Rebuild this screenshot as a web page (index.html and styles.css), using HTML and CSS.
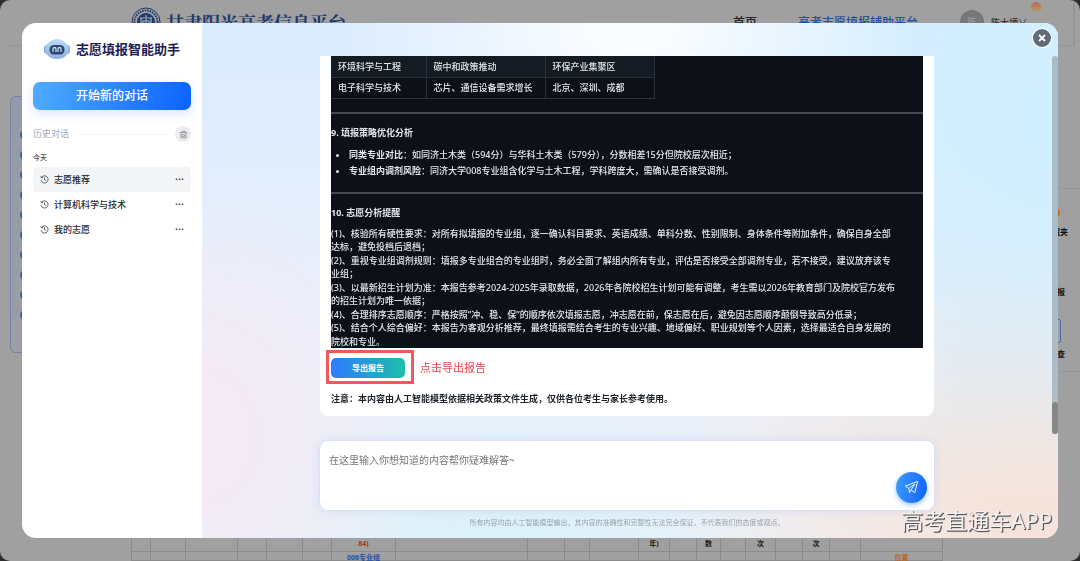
FILE: index.html
```html
<!DOCTYPE html>
<html lang="zh-CN">
<head>
<meta charset="utf-8">
<meta name="viewport" content="width=device-width, initial-scale=1">
<title>志愿填报智能助手</title>
<link rel="stylesheet" href="styles.css">
</head>
<body>
<div class="page">
  <header class="site-header">
    <div class="brand">
      <svg class="brand-seal" viewBox="0 0 30 30" aria-hidden="true">
        <circle cx="15" cy="15" r="14" fill="none" stroke="#1d3a68" stroke-width="1"/>
        <circle cx="15" cy="15" r="11.5" fill="none" stroke="#1d3a68" stroke-width="2" stroke-dasharray="1.5 1"/>
        <circle cx="15" cy="15" r="9" fill="#1d3a68"/>
        <path d="M9 11h12M15 8v3M10 11v10M20 11v10M12 14h6v5h-6zM15 12v8" fill="none" stroke="#a8b0bb" stroke-width="1.2"/>
      </svg>
      <span class="brand-name">甘肃阳光高考信息平台</span>
    </div>
    <nav class="site-nav">
      <a class="nav-link" href="#">首页</a>
      <a class="nav-link nav-current" href="#">高考志愿填报辅助平台</a>
    </nav>
    <div class="user"><span class="avatar">陈</span><span>陈大埂∨</span></div>
    <span class="mascot"></span>
  </header>
  <div class="site-body">
    <div class="filter-card"><i></i><i></i><i></i><i></i><i></i><i></i><i></i><i></i><i></i><i></i></div>
    <div class="tool-card">
      <span class="tool-dot"></span>
      <span>收藏夹</span>
      <span class="tool-second">填报</span>
      <span class="tool-frame"></span>
      <span>检查</span>
    </div>
  </div>
  <table class="plan-table">
    <colgroup><col class="w19"><col class="w35"><col class="w52"><col class="w29"><col class="w36"><col class="w29"><col class="w64"><col class="w132"><col class="w37"><col class="w25"><col class="w49"><col class="w31"><col class="w27"><col class="w24"><col class="w25"><col class="w30"><col class="w27"><col class="w27"><col class="w31"><col class="w82"></colgroup>
    <tr><td></td><td></td><td></td><td></td><td></td><td></td><td class="red">84)</td><td></td><td></td><td></td><td></td><td>年)</td><td></td><td>数</td><td></td><td>次</td><td></td><td>次</td><td></td><td></td></tr>
    <tr><td></td><td></td><td></td><td></td><td></td><td></td><td class="blue">006专业组</td><td></td><td></td><td></td><td></td><td></td><td></td><td></td><td></td><td></td><td></td><td></td><td></td><td class="orange">位置</td></tr>
  </table>
</div>

<div class="dialog" role="dialog" aria-label="志愿填报智能助手">
  <aside class="sidebar">
    <div class="logo">
      <svg class="robot" viewBox="0 0 26 20" aria-hidden="true">
        <defs><linearGradient id="head" x1="0" y1="0" x2="0" y2="1"><stop offset="0" stop-color="#b9dcf6"/><stop offset="1" stop-color="#8bb0df"/></linearGradient></defs>
        <rect x="0" y="6" width="6" height="9" rx="3" fill="#8fb2dc"/>
        <rect x="20" y="6" width="6" height="9" rx="3" fill="#8fb2dc"/>
        <path d="M13 0C16 0 17 1 19 2C23 4 25 7 24.500 11.500C24 17 19 20 13 20C7 20 2 17 1.500 11.500C1 7 3 4 7 2C9 1 10 0 13 0Z" fill="url(#head)"/>
        <rect x="5.500" y="6" width="15" height="9.500" rx="4.500" fill="#34456b"/>
        <path d="M9 13v-3a1.500 1.500 0 0 1 3 0v3M14 13v-3a1.500 1.500 0 0 1 3 0v3" fill="none" stroke="#b5dcfa" stroke-width="1.300"/>
      </svg>
      <span>志愿填报智能助手</span>
    </div>
    <button class="new-chat" type="button">开始新的对话</button>
    <div class="history-head">
      <span>历史对话</span><span class="rule"></span>
      <button class="clear" type="button" aria-label="清空历史对话">
        <svg viewBox="0 0 12 12" aria-hidden="true"><path d="M1 3.500h10M4 3.500V1.500h4v2M2.500 3.500v7h7v-7M4.500 6h3v2.500h-3z" fill="none" stroke="#85888e" stroke-width="1"/></svg>
      </button>
    </div>
    <div class="day">今天</div>
    <ul class="history">
      <li class="active"><svg viewBox="0 0 12 12" aria-hidden="true"><path d="M2 3.200A4.800 4.800 0 1 1 1.300 7M1.300 1.500l.4 2.200 2.200-.2M6 3.200v3l2.200 1.300" fill="none" stroke="#2d323c" stroke-width="1"/></svg><a href="#">志愿推荐</a><button type="button" aria-label="更多">···</button></li>
      <li><svg viewBox="0 0 12 12" aria-hidden="true"><path d="M2 3.200A4.800 4.800 0 1 1 1.300 7M1.300 1.500l.4 2.200 2.200-.2M6 3.200v3l2.200 1.300" fill="none" stroke="#2d323c" stroke-width="1"/></svg><a href="#">计算机科学与技术</a><button type="button" aria-label="更多">···</button></li>
      <li><svg viewBox="0 0 12 12" aria-hidden="true"><path d="M2 3.200A4.800 4.800 0 1 1 1.300 7M1.300 1.500l.4 2.200 2.200-.2M6 3.200v3l2.200 1.300" fill="none" stroke="#2d323c" stroke-width="1"/></svg><a href="#">我的志愿</a><button type="button" aria-label="更多">···</button></li>
    </ul>
  </aside>

  <main class="chat">
    <section class="message">
      <div class="report">
        <table class="majors">
          <tr><td>环境科学与工程</td><td>碳中和政策推动</td><td>环保产业集聚区</td></tr>
          <tr><td>电子科学与技术</td><td>芯片、通信设备需求增长</td><td>北京、深圳、成都</td></tr>
        </table>
        <hr>
        <h3>9. 填报策略优化分析</h3>
        <ul>
          <li><strong>同类专业对比</strong>：如同济土木类（594分）与华科土木类（579分），分数相差15分但院校层次相近；</li>
          <li><strong>专业组内调剂风险</strong>：同济大学008专业组含化学与土木工程，学科跨度大，需确认是否接受调剂。</li>
        </ul>
        <hr>
        <h3>10. 志愿分析提醒</h3>
        <p>(1)、核验所有硬性要求：对所有拟填报的专业组，逐一确认科目要求、英语成绩、单科分数、性别限制、身体条件等附加条件，确保自身全部<br>达标，避免投档后退档；<br>
        (2)、重视专业组调剂规则：填报多专业组合的专业组时，务必全面了解组内所有专业，评估是否接受全部调剂专业，若不接受，建议放弃该专<br>业组；<br>
        (3)、以最新招生计划为准：本报告参考2024-2025年录取数据，2026年各院校招生计划可能有调整，考生需以2026年教育部门及院校官方发布<br>的招生计划为唯一依据；<br>
        (4)、合理排序志愿顺序：严格按照“冲、稳、保”的顺序依次填报志愿，冲志愿在前，保志愿在后，避免因志愿顺序颠倒导致高分低录；<br>
        (5)、结合个人综合偏好：本报告为客观分析推荐，最终填报需结合考生的专业兴趣、地域偏好、职业规划等个人因素，选择最适合自身发展的<br>院校和专业。</p>
      </div>
      <div class="export-row">
        <span class="export-wrap"><button class="export" type="button">导出报告</button><span class="mark"></span></span>
        <span class="mark-text">点击导出报告</span>
      </div>
      <p class="notice">注意：本内容由人工智能模型依据相关政策文件生成，仅供各位考生与家长参考使用。</p>
    </section>
    <form class="composer">
      <textarea aria-label="输入内容" placeholder="在这里输入你想知道的内容帮你疑难解答~"></textarea>
      <button class="send" type="button" aria-label="发送">
        <svg viewBox="0 0 16 16" aria-hidden="true"><path d="M1.500 6.500L14.500 1.500L11.500 13.500L7.500 10.500L6 13.500L5 9Z M5 9L11.500 4.500L7.500 10.500" fill="none" stroke="#fff" stroke-width="1" stroke-linejoin="round"/></svg>
      </button>
    </form>
    <p class="disclaimer">所有内容均由人工智能模型输出，其内容的准确性和完整性无法完全保证，不代表我们的态度或观点。</p>
    <div class="scroll"><span></span></div>
  </main>
  <button class="close" type="button" aria-label="关闭"><svg viewBox="0 0 8 8" aria-hidden="true"><path d="M1 1l6 6M7 1l-6 6" stroke="#fff" stroke-width="1.800"/></svg></button>
</div>
<div class="watermark">高考直通车APP</div>
</body>
</html>
```

FILE: styles.css
```css
* { box-sizing: border-box; }
body {
  margin: 0;
  background: #2e2e2e;
  font: 500 9px/1.5 "Noto Sans", "Noto Sans CJK SC", sans-serif;
  color: #1d2129;
}
button { font: inherit; border: 0; padding: 0; cursor: pointer; }
a { color: inherit; text-decoration: none; }
p, h3, ul, hr { margin: 0; padding: 0; }

/* dimmed page behind the dialog */
.page {
  display: flex;
  flex-direction: column;
  height: 100vh;
  overflow: hidden;
  background: #a0a0a0;
  border-radius: 10px;
}
.site-header {
  position: relative;
  display: flex;
  flex: none;
  height: 46px;
  margin: 0 5px;
  padding: 7px 46px 0 126px;
  border-bottom: 1px solid #959595;
  border-right: 2px solid #959595;
}
.brand { display: flex; gap: 5px; flex: 1; }
.brand-seal { width: 30px; height: 30px; }
.brand-name {
  font: 700 18px/30px "Noto Serif CJK SC", "Noto Sans CJK SC", serif;
  color: #1d3a68;
}
.site-nav { display: flex; gap: 41px; margin-right: 42px; font-size: 12px; line-height: 32px; color: #222; }
.nav-current { color: #234f9e; }
.user { display: flex; gap: 7px; line-height: 32px; color: #333; }
.avatar {
  width: 24px;
  height: 24px;
  margin-top: 3px;
  border-radius: 50%;
  background: #777;
  color: #999;
  text-align: center;
  line-height: 24px;
}
.mascot {
  position: absolute;
  top: 2px;
  right: 32px;
  width: 10px;
  height: 9px;
  border-radius: 5px 5px 2px 2px;
  background: linear-gradient(#b96a60, #b09a60);
}
.site-body { display: flex; flex: 1; justify-content: space-between; align-items: flex-start; }
.filter-card {
  display: flex;
  flex-direction: column;
  gap: 10px;
  width: 100px;
  height: 257px;
  margin: 50px 0 0 10px;
  padding: 33px 0 0 9px;
  border: 1px solid #7584a8;
  border-radius: 5px;
  background: linear-gradient(#929bab, #9c9fa3);
}
.filter-card i { flex: none; width: 10px; height: 10px; border-radius: 50%; background: #2f64a0; }
.tool-card {
  display: flex;
  flex-direction: column;
  align-items: flex-end;
  width: 80px;
  height: 184px;
  margin-top: 142px;
  padding: 18px 12px 0 0;
  border: 1px solid #969696;
  border-width: 1px 0;
  font-size: 8px;
  font-weight: 700;
  color: #111;
}
.tool-dot { width: 12px; height: 12px; margin: 0 8px 7px 0; border-radius: 50%; background: #b9751f; }
.tool-second { margin: 48px 3px 21px 0; }
.tool-frame { width: 20px; height: 24px; margin: 0 7px 5px 0; border: 1px solid #4c6ca3; border-radius: 2px; }
.tool-card span:last-child { margin-right: 3px; }
.plan-table {
  flex: none;
  width: 811px;
  margin-left: 131px;
  border-collapse: collapse;
  table-layout: fixed;
  font-size: 7px;
  font-weight: 700;
  line-height: 9px;
  color: #181818;
}
.plan-table td { height: 20px; padding: 3px 0 0; border: 1px solid #8b8b8b; text-align: center; white-space: nowrap; }
.plan-table tr:last-child td { height: 9px; padding: 3px 0 0; line-height: 5px; }
.plan-table .red { color: #b02c2c; }
.plan-table .blue { color: #2250a8; }
.plan-table .orange { color: #b8651c; }
.w19 { width: 19px; } .w24 { width: 24px; } .w25 { width: 25px; } .w27 { width: 27px; }
.w29 { width: 29px; } .w30 { width: 30px; } .w31 { width: 31px; } .w35 { width: 35px; }
.w36 { width: 36px; } .w37 { width: 37px; } .w49 { width: 49px; } .w52 { width: 52px; }
.w64 { width: 64px; } .w82 { width: 82px; } .w132 { width: 132px; }

/* assistant dialog */
.dialog {
  position: fixed;
  inset: 23px 22px;
  display: flex;
  border-radius: 14px;
  background: #fff;
}
.sidebar { width: 180px; flex: none; padding: 14px 11px; }
.logo {
  display: flex;
  align-items: center;
  gap: 6px;
  height: 24px;
  padding-left: 11px;
  font-size: 13px;
  font-weight: 700;
  line-height: 24px;
  color: #1d1b54;
}
.robot { width: 26px; height: 20px; }
.new-chat {
  display: block;
  width: 100%;
  height: 28px;
  margin-top: 21px;
  border-radius: 7px;
  background: linear-gradient(100deg, #4facfe, #0c63ff);
  box-shadow: 0 4px 10px #6478ff33;
  font-size: 12px;
  color: #fff;
}
.history-head { display: flex; align-items: center; gap: 8px; margin-top: 16px; height: 16px; color: #a5a8ae; font-weight: 400; }
.rule { flex: 1; height: 1px; background: #f3f4f6; }
.clear { display: flex; align-items: center; justify-content: center; width: 16px; height: 16px; border-radius: 50%; background: #ececee; }
.clear svg { width: 9px; height: 9px; }
.day { margin-top: 11px; font-size: 7px; line-height: 10px; color: #4b4f58; }
.history { margin-top: 4px; list-style: none; }
.history li { display: flex; align-items: center; gap: 5px; height: 25px; padding: 0 7px; border-radius: 4px; color: #24272e; }
.history li.active { background: #f4f5f6; }
.history svg { width: 9px; height: 9px; }
.history a { flex: 1; }
.history button { background: none; color: #333; font-size: 11px; }

.chat {
  position: relative;
  display: flex;
  flex: 1;
  flex-direction: column;
  min-width: 0;
  padding: 33px 123px 0 117px;
  border-radius: 0 14px 14px 0;
  background:
    radial-gradient(ellipse 34% 45% at 50% 0%, #fafdff 10%, #fafdff00),
    radial-gradient(ellipse 50% 75% at 100% 18%, #d0efff 10%, #d0efff00),
    radial-gradient(ellipse 45% 60% at 100% 95%, #f6e4dc 20%, #f6e4dc00),
    radial-gradient(ellipse 25% 50% at 0% 80%, #f3eaf3 20%, #f3eaf300),
    radial-gradient(ellipse 35% 30% at 35% 100%, #dcf1fa 10%, #dcf1fa00),
    linear-gradient(#dbebff, #e7effc 50%, #edf1f8);
}
.message {
  height: 360px;
  margin: 0 1px;
  padding: 0 11px;
  border-radius: 0 0 8px 8px;
  background: #fff;
}
.report { background: #0d1117; color: #e3e7ec; }
.majors { border-collapse: collapse; }
.majors td { height: 21px; padding: 0 7px; border: 1px solid #2b323b; border-top: 0; }
.majors td:first-child { width: 95px; border-left: 0; }
.majors td:nth-child(2) { width: 119px; }
.majors td:nth-child(3) { width: 109px; }
.majors tr:first-child { background: #151b23; }
.report hr { height: 2px; margin-top: 13px; border: 0; background: #45494f; }
.report h3 { padding-top: 12px; font-size: 9px; line-height: 14px; }
.report ul { padding: 7px 0 0 18px; line-height: 16px; }
.report p { padding-top: 7px; white-space: nowrap; }
.export-row { display: flex; align-items: center; gap: 15px; height: 40px; }
.export-wrap { position: relative; display: flex; }
.export { width: 74px; height: 20px; border-radius: 5px; background: linear-gradient(90deg, #2e7bff, #1cbfa9); color: #fff; font-size: 8px; font-weight: 700; }
.mark { position: absolute; inset: -8px -9px -6px -5px; border: 3px solid #f0585c; pointer-events: none; }
.mark-text { font-size: 11px; font-weight: 400; color: #e5484d; }
.notice { padding-top: 4px; font-weight: 700; }
.composer {
  position: relative;
  height: 71px;
  margin-top: 24px;
}
.composer textarea {
  display: block;
  width: 100%;
  height: 100%;
  padding: 12px 9px;
  border: 1px solid #d9e2f5;
  border-radius: 9px;
  background: #fff;
  box-shadow: 0 0 8px #b4c8f566;
  font: 400 10px/15px "Noto Sans", "Noto Sans CJK SC", sans-serif;
  resize: none;
}
.composer textarea::placeholder { color: #777; }
.send {
  position: absolute;
  right: 8px;
  bottom: 8px;
  display: flex;
  align-items: center;
  justify-content: center;
  width: 31px;
  height: 31px;
  border-radius: 50%;
  background: linear-gradient(100deg, #409cff, #0f62fe);
  box-shadow: 0 2px 5px #4facfe99;
}
.send svg { width: 15px; height: 15px; }
.disclaimer { margin-top: 7px; font-size: 7px; line-height: 10px; font-weight: 400; text-align: center; color: #9aa3ad; }
.scroll { position: absolute; top: 33px; right: 0; width: 6px; height: 378px; border-radius: 3px; background: #9fb0bccc; }
.scroll span { position: absolute; bottom: 0; width: 6px; height: 32px; border-radius: 3px; background: #858789; }
.close {
  position: absolute;
  top: 6px;
  right: 7px;
  display: flex;
  align-items: center;
  justify-content: center;
  width: 18px;
  height: 18px;
  border-radius: 50%;
  background: #5f6b75;
  box-shadow: 0 0 0 1px #fff;
}
.close svg { width: 8px; height: 8px; }
.watermark {
  position: fixed;
  right: 28px;
  bottom: 25px;
  font-size: 22px;
  font-weight: 400;
  line-height: 32px;
  color: #f4f0ee;
  text-shadow: 1px 1px 0 #55565a, 1px 1px 1px #55565a;
}
```
